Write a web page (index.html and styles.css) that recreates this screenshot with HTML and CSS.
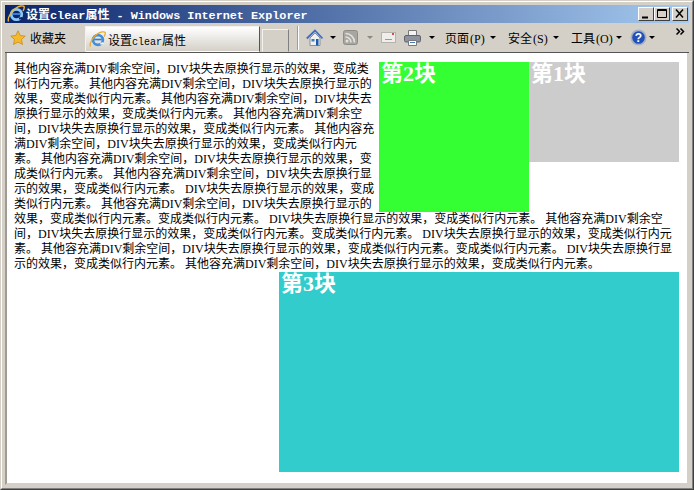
FILE: index.html
```html
<!DOCTYPE html>
<html lang="zh">
<head>
    <meta charset="UTF-8">
    <meta name="viewport" content="width=device-width, initial-scale=1.0">
    <title>设置clear属性</title>
    <link rel="stylesheet" href="styles.css">
</head>
<body>
    <div class="window">
        <div class="frame">
            <!-- title bar -->
            <div class="titlebar">
                <svg class="ie-icon" width="18" height="18" viewBox="0 0 18 18">
                    <circle cx="9.500" cy="9.500" r="5.200" fill="none" stroke="#8cc8f5" stroke-width="2.800"/>
                    <path d="M5.500 9h8" stroke="#3a8ae0" stroke-width="1.800"/>
                    <path d="M12 13.500l3.500-.5" stroke="#0a246a" stroke-width="2.200"/>
                    <path d="M1.500 16.500C.2 13 4 6.500 9 3c3-2 7-2.800 8-1.500.7 1-.2 3-1 4.500" fill="none" stroke="#f0b432" stroke-width="1.400"/>
                </svg>
                <span class="title-text">设置<span class="title-latin">clear</span>属性<span class="title-latin"> - Windows Internet Explorer</span></span>
                <div class="win-buttons">
                    <div class="win-btn"><svg width="14" height="12" viewBox="0 0 14 12"><path d="M3 9.500h6" stroke="#000" stroke-width="2"/></svg></div>
                    <div class="win-btn"><svg width="14" height="12" viewBox="0 0 14 12"><path d="M2.500 1.500h9v8h-9z M2.500 2.500h9" fill="none" stroke="#000"/></svg></div>
                    <div class="win-btn win-close"><svg width="14" height="12" viewBox="0 0 14 12"><path d="M3 1.500l7 8M10 1.500l-7 8" stroke="#000" stroke-width="1.500"/></svg></div>
                </div>
            </div>

            <!-- toolbar -->
            <div class="toolbar">
                <svg class="star" width="16" height="16" viewBox="0 0 16 16">
                    <path d="M8 .8l2.200 4.700 5 .6-3.700 3.400 1 5L8 12l-4.500 2.500 1-5L.8 6.100l5-.6z" fill="#f6b92b" stroke="#c98a1a" stroke-width=".8"/>
                </svg>
                <span class="fav-text">收藏夹</span>
                <div class="tab">
                    <svg class="ie-icon" width="17" height="17" viewBox="0 0 18 18">
                        <circle cx="9.500" cy="9.500" r="5.200" fill="none" stroke="#3f8fdc" stroke-width="2.800"/>
                        <path d="M5.500 9h8" stroke="#2f7fd8" stroke-width="1.800"/>
                        <path d="M12 13.500l3.500-.5" stroke="#f4f2ee" stroke-width="2.200"/>
                        <path d="M1.500 16.500C.2 13 4 6.500 9 3c3-2 7-2.800 8-1.500.7 1-.2 3-1 4.500" fill="none" stroke="#eda92a" stroke-width="1.400"/>
                    </svg>
                    <span>设置<span class="tab-latin">clear</span>属性</span>
                </div>
                <div class="new-tab"></div>
                <div class="separator"></div>

                <svg class="home" width="17" height="18" viewBox="0 0 17 18">
                    <path d="M4 9v7.500h10V9L9 4z" fill="#eef0f2" stroke="#8a8f9c"/>
                    <path d="M.8 9.500L9 1.500l7.500 8" fill="none" stroke="#3d6fc4" stroke-width="1.800"/>
                    <path d="M5.500 10h3v2.500h-3z" fill="#4a78b8"/>
                    <path d="M10 10h2.500v6.500H10z" fill="#1f5aa8"/>
                </svg>
                <span class="arrow arrow-home"></span>

                <svg class="rss" width="15" height="15" viewBox="0 0 15 15">
                    <rect x=".5" y=".5" width="14" height="14" rx="2" fill="#a8a6a0" stroke="#8e8c86"/>
                    <circle cx="4" cy="11" r="1.500" fill="#e4e3df"/>
                    <path d="M2.500 7a5.500 5.500 0 0 1 5.500 5.500M2.500 3.500a9 9 0 0 1 9 9" fill="none" stroke="#e4e3df" stroke-width="1.500"/>
                </svg>
                <span class="arrow arrow-grey"></span>

                <svg class="mail" width="15" height="11" viewBox="0 0 15 11">
                    <rect x=".5" y=".5" width="14" height="10" fill="#efeeea" stroke="#b5b3ad"/>
                    <path d="M4 7.500h7" stroke="#9a9892"/>
                    <rect x="11" y="1" width="2" height="2" fill="#d64a4a"/>
                </svg>

                <svg class="printer" width="17" height="16" viewBox="0 0 17 16">
                    <path d="M4.500.5h8v5h-8z" fill="#f4f4f2" stroke="#77797f"/>
                    <rect x=".5" y="5.500" width="16" height="6.500" rx="1.500" fill="#8f949c" stroke="#5f636b"/>
                    <path d="M4.500 10.500h8v5h-8z" fill="#fff" stroke="#77797f"/>
                    <path d="M6 12.500h5" stroke="#4a78b8"/>
                </svg>
                <span class="arrow arrow-print"></span>

                <span class="menu">页面<span class="key">(P)</span></span>
                <span class="arrow arrow-menu"></span>
                <span class="menu">安全<span class="key">(S)</span></span>
                <span class="arrow arrow-menu"></span>
                <span class="menu">工具<span class="key">(O)</span></span>
                <span class="arrow arrow-menu"></span>

                <svg class="help" width="17" height="17" viewBox="0 0 17 17">
                    <circle cx="8.500" cy="8.500" r="8" fill="#a3b1c8"/>
                    <circle cx="8.500" cy="8.500" r="6.300" fill="#2150b8"/>
                    <text x="8.500" y="13" text-anchor="middle" class="help-mark">?</text>
                </svg>
                <span class="arrow arrow-help"></span>
                <svg class="more" width="9" height="7" viewBox="0 0 9 7">
                    <path d="M.5 .5L3.500 3.500.5 6.500M4.500 .5L7.500 3.500 4.500 6.500" fill="none" stroke="#000" stroke-width="1.500"/>
                </svg>
            </div>

            <!-- page -->
            <div class="content">
                <div class="box box1">第1块</div>
                <div class="box box2">第2块</div>
                其他内容充满DIV剩余空间，DIV块失去原换行显示的效果，变成类似行内元素。
                其他内容充满DIV剩余空间，DIV块失去原换行显示的效果，变成类似行内元素。
                其他内容充满DIV剩余空间，DIV块失去原换行显示的效果，变成类似行内元素。
                其他内容充满DIV剩余空间，DIV块失去原换行显示的效果，变成类似行内元素。
                其他内容充满DIV剩余空间，DIV块失去原换行显示的效果，变成类似行内元素。
                其他内容充满DIV剩余空间，DIV块失去原换行显示的效果，变成类似行内元素。
                其他内容充满DIV剩余空间，DIV块失去原换行显示的效果，变成类似行内元素。
                DIV块失去原换行显示的效果，变成类似行内元素。
                其他容充满DIV剩余空间，DIV块失去原换行显示的效果，变成类似行内元素。变成类似行内元素。
                DIV块失去原换行显示的效果，变成类似行内元素。
                其他容充满DIV剩余空间，DIV块失去原换行显示的效果，变成类似行内元素。变成类似行内元素。
                DIV块失去原换行显示的效果，变成类似行内元素。
                其他容充满DIV剩余空间，DIV块失去原换行显示的效果，变成类似行内元素。变成类似行内元素。
                DIV块失去原换行显示的效果，变成类似行内元素。
                其他容充满DIV剩余空间，DIV块失去原换行显示的效果，变成类似行内元素。
                <div class="box box3">第3块</div>
            </div>
        </div>
    </div>
</body>
</html>
```

FILE: styles.css
```css
* {
    box-sizing: border-box;
}

html,
body {
    margin: 0;
    padding: 0;
    overflow: hidden;
}

body {
    width: 694px;
    height: 490px;
    font-family: "Liberation Serif", "Noto Sans CJK SC", serif;
    font-size: 12px;
    color: #000;
    background-color: #d4d0c8;
}

.window {
    width: 694px;
    height: 490px;
    border: 1px solid;
    border-color: #d4d0c8 #404040 #404040 #d4d0c8;
}

.frame {
    height: 100%;
    padding: 3px;
    background-color: #d4d0c8;
    border: 1px solid;
    border-color: #fff #808080 #808080 #fff;
    display: flex;
    flex-direction: column;
}

.titlebar {
    height: 18px;
    flex: none;
    display: flex;
    align-items: center;
    padding-left: 2px;
    padding-right: 1px;
    color: #fff;
    font-weight: bold;
    background: linear-gradient(to right, #0a246a, #a6caf0);
}

.title-text {
    margin-left: 1px;
    font-family: "Noto Sans CJK SC", sans-serif;
    font-size: 12px;
    white-space: pre;
}

.title-latin {
    font-family: "Liberation Mono", monospace;
    font-size: 11.800px;
}

.win-buttons {
    margin-left: auto;
    display: flex;
}

.win-btn {
    width: 16px;
    height: 14px;
    background-color: #d4d0c8;
    border: 1px solid;
    border-color: #fff #404040 #404040 #fff;
    display: flex;
    align-items: center;
    justify-content: center;
}

.win-close {
    margin-left: 2px;
}

.toolbar {
    height: 30px;
    flex: none;
    display: flex;
    align-items: flex-end;
    font-family: "Noto Sans CJK SC", sans-serif;
    position: relative;
    border-bottom: 1px solid #555;
}

.toolbar > svg,
.toolbar > span {
    align-self: center;
}

.star {
    margin-left: 5px;
}

.fav-text {
    margin-left: 4px;
    width: 36px;
    white-space: nowrap;
}

.tab {
    margin-left: 19px;
    width: 175px;
    height: 26px;
    padding-left: 3px;
    display: flex;
    align-items: center;
    gap: 2px;
    background: linear-gradient(to bottom, #fff, #d4d0c8);
    border: 1px solid;
    border-color: #f4f2ee #555 transparent #f4f2ee;
}

.tab-latin {
    font-family: "Liberation Mono", monospace;
    font-size: 10px;
}

.new-tab {
    margin-left: 2px;
    width: 27px;
    height: 23px;
    border: 1px solid;
    border-color: #f4f2ee #808080 transparent #f4f2ee;
}

.separator {
    align-self: center;
    margin-left: 8px;
    width: 2px;
    height: 24px;
    background-color: #a09c94;
    border-right: 1px solid #fff;
}

.home {
    margin-left: 7px;
}

.arrow {
    width: 0;
    height: 0;
    border-style: solid;
    border-width: 3px 3px 0 3px;
    border-color: #000 transparent transparent transparent;
}

.arrow-home {
    margin-left: 7px;
}

.rss {
    margin-left: 7px;
}

.arrow-grey {
    margin-left: 9px;
    border-top-color: #8a8880;
}

.mail {
    margin-left: 8px;
}

.printer {
    margin-left: 8px;
}

.arrow-print {
    margin-left: 8px;
}

.menu {
    margin-left: 10px;
    width: 42px;
    white-space: nowrap;
}

.key {
    font-family: "Liberation Serif", serif;
    font-size: 12px;
    margin-left: 1px;
}

.arrow-menu {
    margin-left: 3px;
    margin-right: 2px;
}

.help {
    margin-left: 6px;
}

.help-mark {
    font-family: "Liberation Sans", sans-serif;
    font-size: 12px;
    font-weight: bold;
    fill: #fff;
}

.arrow-help {
    margin-left: 2px;
}

.toolbar > .more {
    position: absolute;
    right: 4px;
    top: 5px;
}

.content {
    flex: 1;
    padding: 9px 8px 0 7px;
    background-color: #fff;
    border: 2px solid;
    border-color: #fff #d4d0c8 #d4d0c8 #a09c94;
    border-top: 0;
    line-height: 15px;
    overflow: hidden;
}

.box {
    float: right;
    color: #fff;
    font-size: 22px;
    font-weight: bold;
    line-height: 24px;
    padding-left: 2px;
}

.box1 {
    width: 150px;
    height: 100px;
    background-color: #ccc;
}

.box2 {
    width: 150px;
    height: 150px;
    background-color: #3f3;
}

.box3 {
    clear: both;
    width: 400px;
    height: 200px;
    background-color: #3cc;
}
```
